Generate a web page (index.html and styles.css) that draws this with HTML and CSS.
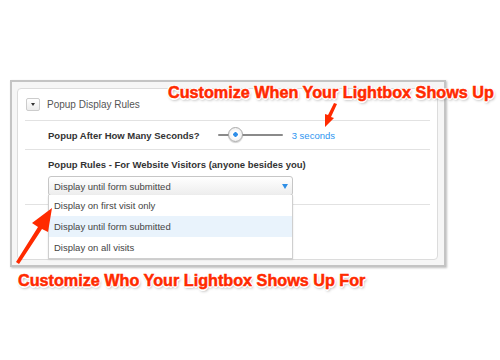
FILE: index.html
```html
<!DOCTYPE html>
<html lang="en">
<head>
    <meta charset="UTF-8">
    <title>Popup Display Rules</title>
    <link rel="stylesheet" href="styles.css">
</head>
<body>
    <div class="stage">
        <div class="frame">
            <div class="panel">
                <div class="panel-head">
                    <span class="toggle"></span>
                    <span class="head-title">Popup Display Rules</span>
                </div>
                <div class="row row-delay">
                    <span class="label">Popup After How Many Seconds?</span>
                    <span class="slider"><span class="knob"></span></span>
                    <span class="slider-value">3 seconds</span>
                </div>
                <div class="row row-rules">
                    <div class="label">Popup Rules - For Website Visitors (anyone besides you)</div>
                    <div class="select">
                        <span>Display until form submitted</span>
                        <span class="caret"></span>
                    </div>
                    <ul class="options">
                        <li>Display on first visit only</li>
                        <li class="hover">Display until form submitted</li>
                        <li>Display on all visits</li>
                    </ul>
                </div>
            </div>
        </div>

        <!-- annotations -->
        <div class="note note-top">Customize When Your Lightbox Shows Up</div>
        <div class="note note-bottom">Customize Who Your Lightbox Shows Up For</div>
        <svg class="arrows" width="500" height="360" viewBox="0 0 500 360">
            <path d="M334 103 L337 104 L331 117 L334 118 L325 127 L325 114 L328 115 Z" fill="#ff2a00"/>
            <path d="M16 262 L38 227 L32 223 L52 208 L48 232 L42 229 L19 264 Z" fill="#ff2a00"/>
        </svg>
    </div>
</body>
</html>
```

FILE: styles.css
```css
body {
    margin: 0;
    background: #fff;
    font-family: "Liberation Sans", Arial, sans-serif;
    color: #333;
}
.stage {
    position: relative;
    width: 500px;
    height: 360px;
    overflow: hidden;
    padding-top: 80px;
    box-sizing: border-box;
}
.frame {
    margin-left: 10px;
    width: 436px;
    height: 187px;
    box-sizing: border-box;
    border: 2px solid #c4c4c4;
    background: #f6f6f6;
    padding: 6px 0 0 5px;
    box-shadow: 1px 1px 2px rgba(0, 0, 0, 0.25);
}
.panel {
    width: 421px;
    height: 172px;
    box-sizing: border-box;
    background: #fff;
    border: 1px solid #dcdcdc;
    border-radius: 4px;
    padding: 0 7px;
}
.panel-head {
    display: flex;
    align-items: center;
    height: 32px;
    border-bottom: 1px solid #e2e2e2;
    padding-left: 1px;
    box-sizing: border-box;
}
.toggle {
    width: 12px;
    height: 11px;
    border: 1px solid #ccc;
    border-radius: 2px;
    background: linear-gradient(#fff, #ececec);
    position: relative;
    margin-top: -1px;
}
.toggle::after {
    content: "";
    position: absolute;
    left: 4px;
    top: 4px;
    border-left: 2px solid transparent;
    border-right: 2px solid transparent;
    border-top: 3px solid #333;
}
.head-title {
    margin-left: 7px;
    font-size: 10px;
    color: #555;
}
.row {
    padding-left: 23px;
    border-bottom: 1px solid #e2e2e2;
}
.label {
    font-size: 9.5px;
    font-weight: bold;
    color: #333;
}
.row-delay {
    display: flex;
    align-items: center;
    height: 29px;
    box-sizing: border-box;
}
.slider {
    position: relative;
    width: 65px;
    height: 2px;
    background: #8a8a8a;
    margin-left: 18px;
    border-radius: 1px;
}
.knob {
    position: absolute;
    left: 10px;
    top: -7px;
    width: 15px;
    height: 15px;
    box-sizing: border-box;
    border: 1px solid #aaa;
    border-radius: 50%;
    background: radial-gradient(circle, #2e8ee8 0 2px, #fff 2.5px, #e6e6e6 100%);
    box-shadow: 0 1px 1px rgba(0, 0, 0, 0.2);
}
.slider-value {
    margin-left: 9px;
    font-size: 9.5px;
    color: #2f95f0;
}
.row-rules {
    position: relative;
    height: 55px;
    padding-top: 9px;
    box-sizing: border-box;
}
.select {
    display: flex;
    align-items: center;
    justify-content: space-between;
    width: 245px;
    height: 20px;
    margin-top: 6px;
    box-sizing: border-box;
    border: 1px solid #c6c6c6;
    border-radius: 3px;
    background: linear-gradient(#fff, #ededed);
    padding: 0 4px 0 5px;
    font-size: 9.5px;
    color: #444;
}
.caret {
    border-left: 3px solid transparent;
    border-right: 3px solid transparent;
    border-top: 5px solid #2f8fe6;
}
.options {
    position: absolute;
    left: 23px;
    top: 45px;
    width: 245px;
    margin: 0;
    padding: 0;
    list-style: none;
    box-sizing: border-box;
    border: 1px solid #cfcfcf;
    border-top: none;
    background: #fff;
    box-shadow: 0 1px 2px rgba(0, 0, 0, 0.1);
}
.options li {
    height: 21px;
    line-height: 21px;
    padding-left: 5px;
    font-size: 9.5px;
    color: #444;
}
.options li.hover {
    background: #e9f3fc;
}
.note {
    position: absolute;
    font-size: 16.2px;
    font-weight: bold;
    color: #ff2a00;
    white-space: nowrap;
    -webkit-text-stroke: 0.5px #ff2a00;
    text-shadow:
        -1px -1px 0 #fff, 1px -1px 0 #fff, -1px 1px 0 #fff, 1px 1px 0 #fff,
        0 -1.5px 0 #fff, 0 1.5px 0 #fff, -1.5px 0 0 #fff, 1.5px 0 0 #fff,
        1px 2px 3px rgba(0, 0, 0, 0.45);
}
.note-top {
    left: 168px;
    top: 83px;
}
.note-bottom {
    left: 18px;
    top: 271px;
}
.arrows {
    position: absolute;
    left: 0;
    top: 0;
}
```
